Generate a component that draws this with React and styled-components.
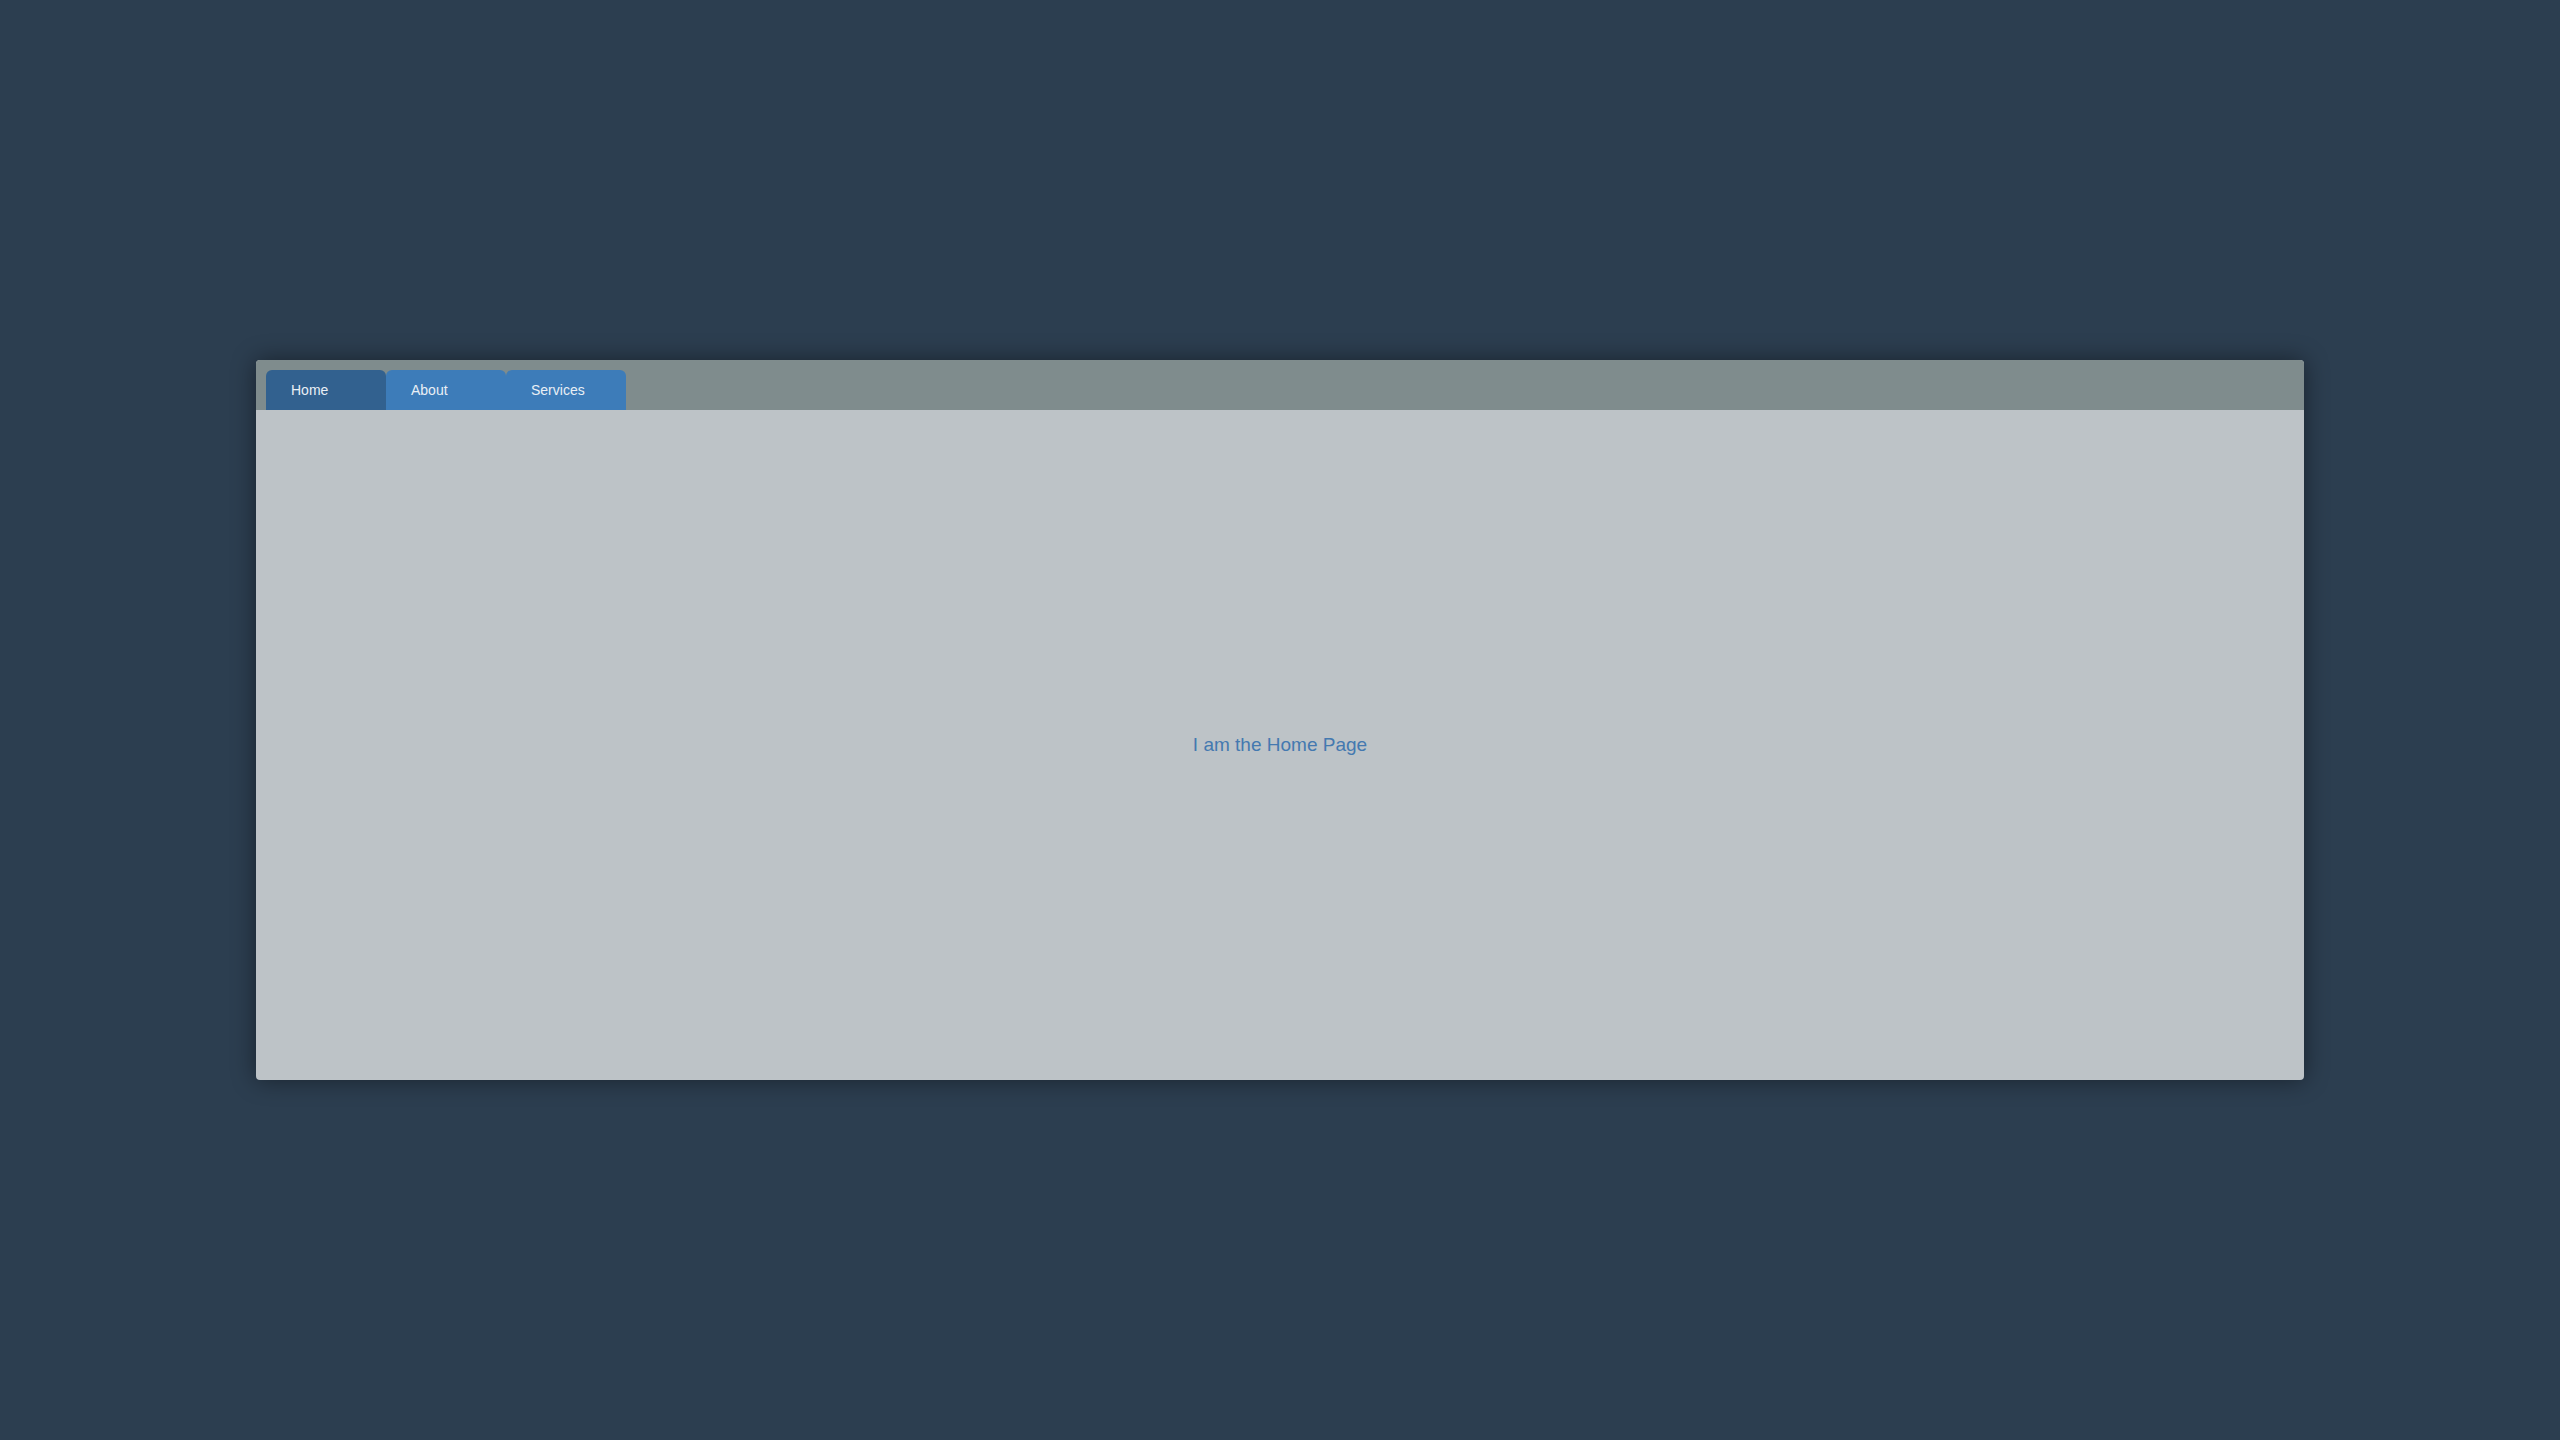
import styled, { createGlobalStyle } from "styled-components"
import { useState } from "react"

const GlobalStyle = createGlobalStyle`
	html, body {
		margin: 0;
		padding: 0;
		background-color: #2c3e50;
		font-family: "Liberation Sans", Arial, sans-serif;
	}
	#root {
		min-height: 100vh;
	}
`

const Page = styled.div`
	display: flex;
	justify-content: center;
	padding-top: 360px;
`

const Card = styled.div`
	width: 2048px;
	height: 720px;
	display: flex;
	flex-direction: column;
	border-radius: 4px;
	overflow: hidden;
	background-color: #bdc3c7;
	box-shadow: 0 0 24px rgba(0, 0, 0, 0.45);
`

const TabBar = styled.nav`
	display: flex;
	align-items: flex-end;
	height: 50px;
	padding: 0 10px;
	box-sizing: border-box;
	background-color: #7f8c8d;
`

const Tab = styled.button`
	width: 120px;
	height: 40px;
	border: none;
	border-radius: 6px 6px 0 0;
	padding: 0 0 0 25px;
	text-align: left;
	font-family: "Liberation Sans", Arial, sans-serif;
	font-size: 14px;
	color: #e9eff5;
	cursor: pointer;
	background-color: ${({ $active }) => ($active ? "#32618f" : "#3d7cb9")};
`

const Content = styled.main`
	flex: 1;
	display: flex;
	align-items: center;
	justify-content: center;
	font-size: 19px;
	color: #4479b0;
`

const tabs = ["Home", "About", "Services"]

export default function App() {
	const [active, setActive] = useState("Home")
	return (
		<>
			<GlobalStyle />
			<Page>
				<Card>
					<TabBar>
						{tabs.map((t) => (
							<Tab key={t} $active={t === active} onClick={() => setActive(t)}>
								{t}
							</Tab>
						))}
					</TabBar>
					<Content>I am the {active} Page</Content>
				</Card>
			</Page>
		</>
	)
}
